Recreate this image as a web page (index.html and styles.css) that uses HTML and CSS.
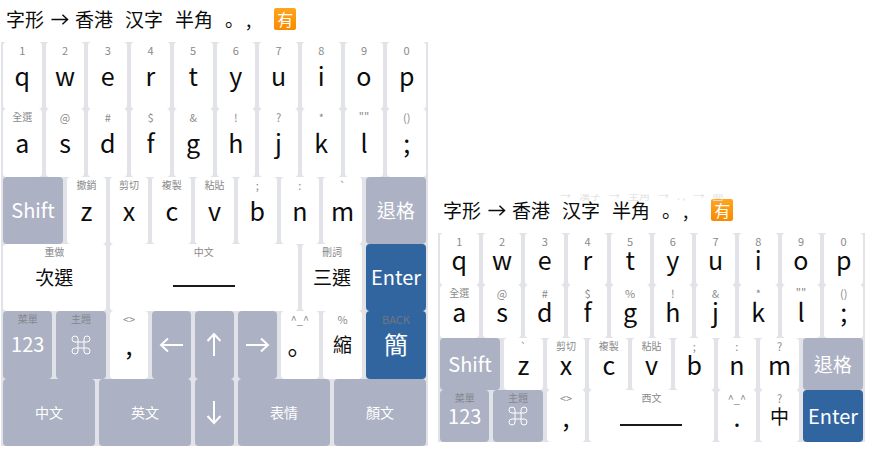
FILE: index.html
```html
<!DOCTYPE html>
<html lang="zh-Hant">
<head>
<meta charset="utf-8">
<title>鍵盤</title>
<link rel="stylesheet" href="styles.css">
</head>
<body>
<svg class="defs" aria-hidden="true">
  <symbol id="right" viewBox="0 0 26 26"><path d="M2 13h22M17 6.5l7 6.5-7 6.5"/></symbol>
  <symbol id="left" viewBox="0 0 26 26"><path d="M24 13H2M9 6.5L2 13l7 6.5"/></symbol>
  <symbol id="up" viewBox="0 0 26 26"><path d="M13 24V2M6.5 9L13 2l6.5 7"/></symbol>
  <symbol id="down" viewBox="0 0 26 26"><path d="M13 2v22M6.5 17l6.5 7 6.5-7"/></symbol>
  <symbol id="cmd" viewBox="0 0 20 20"><path d="M7 7h6v6H7zM7 7H4a3 3 0 1 1 3-3zM13 7V4a3 3 0 1 1 3 3zM13 13h3a3 3 0 1 1-3 3zM7 13v3a3 3 0 1 1-3-3z"/></symbol>
</svg>
<main class="page">
  <section class="panel">
    <div class="bar">
      <button class="opt glyph"><span>字形</span><svg class="to"><use href="#right"/></svg><span>香港</span></button>
      <button class="opt">汉字</button>
      <button class="opt">半角</button>
      <button class="opt punct" lang="zh-Hans"><span>。</span><span>,</span></button>
      <button class="opt badge">有</button>
    </div>
    <div class="board tall">
      <button class="key"><small>1</small><b>q</b></button>
      <button class="key"><small>2</small><b>w</b></button>
      <button class="key"><small>3</small><b>e</b></button>
      <button class="key"><small>4</small><b>r</b></button>
      <button class="key"><small>5</small><b>t</b></button>
      <button class="key"><small>6</small><b>y</b></button>
      <button class="key"><small>7</small><b>u</b></button>
      <button class="key"><small>8</small><b>i</b></button>
      <button class="key"><small>9</small><b>o</b></button>
      <button class="key"><small>0</small><b>p</b></button>

      <button class="key"><small class="han">全選</small><b>a</b></button>
      <button class="key"><small>@</small><b>s</b></button>
      <button class="key"><small>#</small><b>d</b></button>
      <button class="key"><small>$</small><b>f</b></button>
      <button class="key"><small>&amp;</small><b>g</b></button>
      <button class="key"><small>!</small><b>h</b></button>
      <button class="key"><small>?</small><b>j</b></button>
      <button class="key"><small>*</small><b>k</b></button>
      <button class="key"><small>""</small><b>l</b></button>
      <button class="key"><small>()</small><b>;</b></button>

      <button class="key fn w12"><b class="word">Shift</b></button>
      <button class="key"><small class="han">撤銷</small><b>z</b></button>
      <button class="key"><small class="han">剪切</small><b>x</b></button>
      <button class="key"><small class="han">複製</small><b>c</b></button>
      <button class="key"><small class="han">粘貼</small><b>v</b></button>
      <button class="key"><small>;</small><b>b</b></button>
      <button class="key"><small>:</small><b>n</b></button>
      <button class="key"><small>`</small><b>m</b></button>
      <button class="key fn w12"><b class="cjk">退格</b></button>

      <button class="key w20"><small class="han">重做</small><b class="cjk">次選</b></button>
      <button class="key w36" aria-label="空格"><small class="han">中文</small><i class="space"></i></button>
      <button class="key w12"><small class="han">刪詞</small><b class="cjk">三選</b></button>
      <button class="key enter w12"><b class="word">Enter</b></button>

      <button class="key fn w10"><small class="han">菜單</small><b class="word">123</b></button>
      <button class="key fn w10" aria-label="主題"><small class="han">主題</small><svg class="cmd"><use href="#cmd"/></svg></button>
      <button class="key"><small>&lt;&gt;</small><b>,</b></button>
      <button class="key fn" aria-label="左"><svg class="arrow"><use href="#left"/></svg></button>
      <button class="key fn" aria-label="上"><svg class="arrow"><use href="#up"/></svg></button>
      <button class="key fn" aria-label="右"><svg class="arrow"><use href="#right"/></svg></button>
      <button class="key" lang="zh-Hans"><small>^_^</small><b>。</b></button>
      <button class="key"><small>%</small><b class="cjk">縮</b></button>
      <button class="key enter w12"><small>BACK</small><b class="big">簡</b></button>

      <button class="key fn w18"><b class="mode">中文</b></button>
      <button class="key fn w18"><b class="mode">英文</b></button>
      <button class="key fn" aria-label="下"><svg class="arrow"><use href="#down"/></svg></button>
      <button class="key fn w18"><b class="mode">表情</b></button>
      <button class="key fn w18"><b class="mode">顏文</b></button>
    </div>
  </section>

  <section class="panel side">
    <div class="bar">
      <div class="faded" aria-hidden="true"><span>→</span><span>漢字</span><span>→</span><span>全角</span><span>→</span><span>. ,</span><span>→</span><span>圈</span></div>
      <button class="opt glyph"><span>字形</span><svg class="to"><use href="#right"/></svg><span>香港</span></button>
      <button class="opt">汉字</button>
      <button class="opt">半角</button>
      <button class="opt punct" lang="zh-Hans"><span>。</span><span>,</span></button>
      <button class="opt badge">有</button>
    </div>
    <div class="board short">
      <button class="key"><small>1</small><b>q</b></button>
      <button class="key"><small>2</small><b>w</b></button>
      <button class="key"><small>3</small><b>e</b></button>
      <button class="key"><small>4</small><b>r</b></button>
      <button class="key"><small>5</small><b>t</b></button>
      <button class="key"><small>6</small><b>y</b></button>
      <button class="key"><small>7</small><b>u</b></button>
      <button class="key"><small>8</small><b>i</b></button>
      <button class="key"><small>9</small><b>o</b></button>
      <button class="key"><small>0</small><b>p</b></button>

      <button class="key"><small class="han">全選</small><b>a</b></button>
      <button class="key"><small>@</small><b>s</b></button>
      <button class="key"><small>#</small><b>d</b></button>
      <button class="key"><small>$</small><b>f</b></button>
      <button class="key"><small>%</small><b>g</b></button>
      <button class="key"><small>!</small><b>h</b></button>
      <button class="key"><small>&amp;</small><b>j</b></button>
      <button class="key"><small>*</small><b>k</b></button>
      <button class="key"><small>""</small><b>l</b></button>
      <button class="key"><small>()</small><b>;</b></button>

      <button class="key fn w12"><b class="word">Shift</b></button>
      <button class="key"><small>`</small><b>z</b></button>
      <button class="key"><small class="han">剪切</small><b>x</b></button>
      <button class="key"><small class="han">複製</small><b>c</b></button>
      <button class="key"><small class="han">粘貼</small><b>v</b></button>
      <button class="key"><small>;</small><b>b</b></button>
      <button class="key"><small>:</small><b>n</b></button>
      <button class="key"><small>?</small><b>m</b></button>
      <button class="key fn w12"><b class="cjk">退格</b></button>

      <button class="key fn w10"><small class="han">菜單</small><b class="word">123</b></button>
      <button class="key fn w10" aria-label="主題"><small class="han">主題</small><svg class="cmd"><use href="#cmd"/></svg></button>
      <button class="key"><small>&lt;&gt;</small><b>,</b></button>
      <button class="key w24" aria-label="空格"><small class="han">西文</small><i class="space"></i></button>
      <button class="key"><small>^_^</small><b>.</b></button>
      <button class="key"><small>?</small><b class="cjk">中</b></button>
      <button class="key enter w12"><b class="word">Enter</b></button>
    </div>
  </section>
</main>
</body>
</html>
```
FILE: styles.css
```css
* { box-sizing: border-box; }

body {
  margin: 0;
  background: #fff;
  color: #0c0c0c;
  font-family: "Noto Sans CJK SC", "Noto Sans CJK TC", sans-serif;
}

button {
  padding: 0;
  border: 0;
  background: none;
  color: inherit;
  font: inherit;
}

svg {
  fill: none;
  stroke: currentColor;
  stroke-width: 2;
}

.defs { display: none; }

.page {
  display: flex;
  align-items: flex-end;
  gap: 10px;
  padding: 0 7px 0 1px;
}

.panel {
  flex: 1;
  min-width: 0;
}

.side { padding-bottom: 4px; }

.bar {
  position: relative;
  display: flex;
  align-items: center;
  gap: 12px;
  height: 42px;
  padding: 0 0 4px 5px;
  font-size: 19px;
  line-height: 24px;
}

.glyph,
.punct {
  display: flex;
  align-items: center;
}

.glyph { gap: 6px; }

.punct { gap: 2px; }

.to {
  width: 19px;
  height: 19px;
}

.badge {
  width: 22px;
  height: 22px;
  margin-left: 11px;
  border-radius: 2px;
  background: linear-gradient(#ffa51f, #f98a00);
  color: #fff;
  font-size: 16px;
  line-height: 22px;
}

.faded {
  position: absolute;
  top: 3px;
  left: 122px;
  display: flex;
  align-items: flex-end;
  gap: 8px;
  height: 7px;
  overflow: hidden;
  color: #e4e4e4;
  font-size: 11px;
  line-height: 12px;
}

.board {
  display: grid;
  grid-template-columns: repeat(80, minmax(0, 1fr));
  grid-auto-rows: 1fr;
  background: #e1e3e8;
}

.tall { min-height: 404px; }

.short { min-height: 209px; }

/* The hint and the label share one cell: hint on top, label centred. */
.key {
  display: grid;
  grid-column: span 8;
  grid-template: minmax(0, 1fr) / minmax(0, 1fr);
  justify-items: center;
  align-items: center;
  margin: 0 2px;
  border-radius: 4px;
  background: #fff;
  white-space: nowrap;
}

.key > * { grid-area: 1 / 1; }

.w10 { grid-column: span 10; }
.w12 { grid-column: span 12; }
.w18 { grid-column: span 18; }
.w20 { grid-column: span 20; }
.w24 { grid-column: span 24; }
.w36 { grid-column: span 36; }

.key small {
  align-self: start;
  margin-top: 2px;
  color: #8a8a8a;
  font-size: 11px;
  line-height: 12px;
}

.key .han { font-size: 10px; }

.key b {
  font-size: 25px;
  font-weight: 400;
  line-height: 24px;
}

.tall b { padding-bottom: 1px; }

.key .word { font-size: 20px; }
.key .cjk { font-size: 19px; }
.key .mode { font-size: 14px; }
.key .big { font-size: 24px; }

.fn {
  background: #acb1c3;
  color: #fff;
}

.enter {
  background: #3165a0;
  color: #fff;
}

.key.fn small { color: #85878d; }
.key.enter small { color: #73777d; }

.space {
  align-self: end;
  width: 62px;
  margin-bottom: 24px;
  border-bottom: 2px solid #1a1a1a;
}

.short .space { margin-bottom: 16px; }

.arrow {
  width: 26px;
  height: 26px;
}

.cmd {
  width: 20px;
  height: 20px;
  stroke-width: 1;
}
```
